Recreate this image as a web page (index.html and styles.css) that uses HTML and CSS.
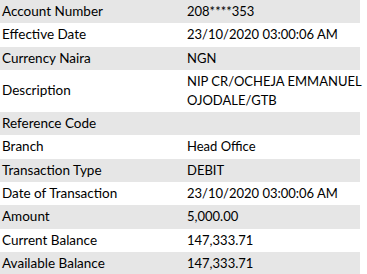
FILE: index.html
```html
<!DOCTYPE html>
<html lang="en">
<head>
    <meta charset="UTF-8">
    <title>Transaction Details</title>
    <link rel="stylesheet" href="styles.css">
</head>
<body>
<table class="details">
    <tr><td class="label">Account Number</td><td class="value">208****353</td></tr>
    <tr><td class="label">Effective Date</td><td class="value">23/10/2020 03:00:06 AM</td></tr>
    <tr><td class="label">Currency Naira</td><td class="value">NGN</td></tr>
    <tr><td class="label">Description</td><td class="value">NIP CR/OCHEJA EMMANUEL<br>OJODALE/GTB</td></tr>
    <tr><td class="label">Reference Code</td><td class="value"></td></tr>
    <tr><td class="label">Branch</td><td class="value">Head Office</td></tr>
    <tr><td class="label">Transaction Type</td><td class="value">DEBIT</td></tr>
    <tr><td class="label">Date of Transaction</td><td class="value">23/10/2020 03:00:06 AM</td></tr>
    <tr><td class="label">Amount</td><td class="value">5,000.00</td></tr>
    <tr><td class="label">Current Balance</td><td class="value">147,333.71</td></tr>
    <tr><td class="label">Available Balance</td><td class="value">147,333.71</td></tr>
</table>
</body>
</html>
```

FILE: styles.css
```css
*{
    margin: 0;
    padding: 0;
}
body{
    background: #fff;
    font-family: "Lato", "Liberation Sans", sans-serif;
    font-size: 13.5px;
    color: #000;
}
.details{
    width: 360px;
    border-collapse: collapse;
    table-layout: fixed;
}
.details tr:nth-child(odd){
    background-color: #e6e6e6;
}
.details td{
    height: 19px;
    line-height: 19px;
    padding: 2px 2px 2.3px 2px;
    vertical-align: middle;
    white-space: nowrap;
}
.details .label{
    width: 180px;
}
.details .value{
    padding-left: 3px;
    padding-right: 0;
    font-size: 13px;
}
```
